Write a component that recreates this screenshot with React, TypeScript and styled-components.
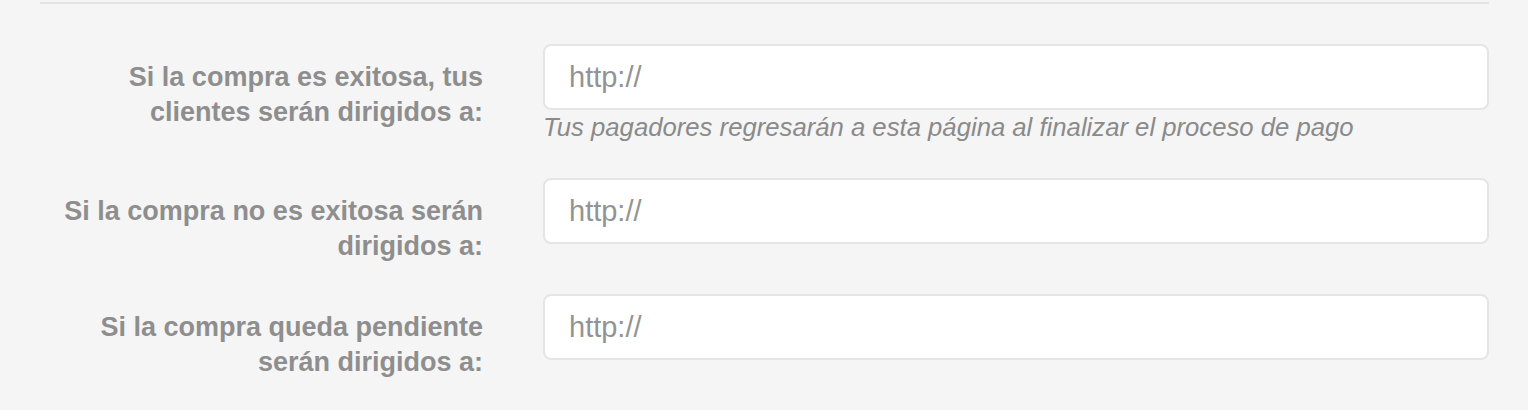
import React from 'react';
import styled, { createGlobalStyle } from 'styled-components';

const GlobalStyle = createGlobalStyle`
	html, body {
		margin: 0;
		padding: 0;
		background: #f5f5f5;
		font-family: "Liberation Sans", Arial, sans-serif;
	}
`;

const Page = styled.main`
	padding: 2px 39px 0 40px;
	height: 410px;
	box-sizing: border-box;
`;

const Section = styled.section`
	border-top: 2px solid #e3e3e3;
	padding: 40px 0 0 0;
	display: flex;
	flex-direction: column;
	gap: 30px;
`;

const Row = styled.div`
	display: grid;
	grid-template-columns: 443px 1fr;
	column-gap: 60px;
	align-items: start;
`;

const Label = styled.label`
	padding-top: 16px;
	text-align: right;
	font-size: 27px;
	line-height: 35px;
	font-weight: 700;
	color: #8e8e8e;
`;

const LabelLine = styled.span`
	display: block;
	white-space: nowrap;
`;

const Field = styled.div`
	display: flex;
	flex-direction: column;
`;

const Input = styled.input`
	box-sizing: border-box;
	height: 66px;
	width: 100%;
	padding: 0 24px;
	border: 2px solid #e5e5e5;
	border-radius: 8px;
	background: #fff;
	font-family: inherit;
	font-size: 29px;
	color: #555;
	outline: none;

	&::placeholder {
		color: #939393;
	}
`;

const Help = styled.p`
	margin: 2px 0 6px;
	font-size: 25.7px;
	line-height: 30px;
	font-style: italic;
	color: #8a8a8a;
`;

type UrlRowProps = {
	lines: string[];
	help?: string;
};

const UrlRow: React.FC<UrlRowProps> = ({ lines, help }) => (
	<Row>
		<Label>
			{lines.map((line) => (
				<LabelLine key={line}>{line}</LabelLine>
			))}
		</Label>
		<Field>
			<Input type="text" placeholder="http://" />
			{help && <Help>{help}</Help>}
		</Field>
	</Row>
);

const App: React.FC = () => {
	return (
		<Page>
			<GlobalStyle />
			<Section>
				<UrlRow
					lines={['Si la compra es exitosa, tus', 'clientes serán dirigidos a:']}
					help="Tus pagadores regresarán a esta página al finalizar el proceso de pago" />
				<UrlRow lines={['Si la compra no es exitosa serán', 'dirigidos a:']} />
				<UrlRow lines={['Si la compra queda pendiente', 'serán dirigidos a:']} />
			</Section>
		</Page>
	);
};

export default App;
